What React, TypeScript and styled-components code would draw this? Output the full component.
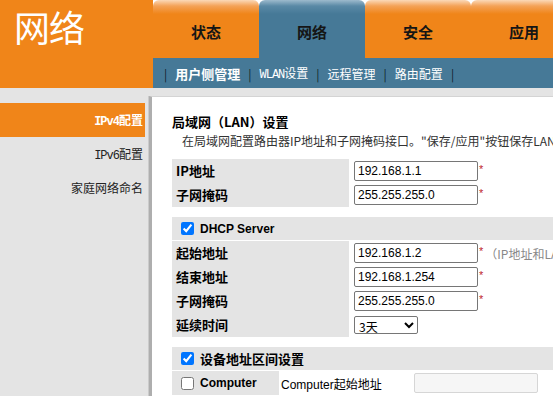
import React from "react";
import styled, { createGlobalStyle } from "styled-components";

const ORANGE = "#f08519";
const BLUE = "#467997";
const GREY = "#e4e4e4";

const GlobalStyle = createGlobalStyle`
  html, body {
    margin: 0;
    padding: 0;
    background: #fff;
  }
  body {
    font-family: "Noto Sans CJK SC", "Liberation Sans", sans-serif;
    overflow: hidden;
  }
`;

const Page = styled.div`
  width: 553px;
  height: 396px;
  overflow: hidden;
  display: flex;
  flex-direction: column;
`;

/* ---------- header ---------- */

const Header = styled.header`
  display: flex;
  height: 88px;
  flex-shrink: 0;
`;

const Brand = styled.div`
  width: 153px;
  flex-shrink: 0;
  box-sizing: border-box;
  background: ${ORANGE};
  color: #fff;
  font-size: 36px;
  line-height: 36px;
  padding: 8px 0 0 14px;
  letter-spacing: -1px;
`;

const NavArea = styled.div`
  flex: 1;
  min-width: 0;
  display: flex;
  flex-direction: column;
`;

const TabRow = styled.nav`
  height: 58px;
  display: flex;
  background: #fff;
`;

const Tab = styled.div<{ $active?: boolean }>`
  width: 106px;
  flex-shrink: 0;
  display: flex;
  align-items: center;
  justify-content: center;
  padding-top: 5px;
  box-sizing: border-box;
  border-radius: 6px 6px 0 0;
  font-size: 15px;
  font-weight: 700;
  color: #151515;
  background: ${(p) =>
    p.$active
      ? `linear-gradient(#9dbacd 0, #5a89a6 6px, ${BLUE} 14px)`
      : `linear-gradient(#fbd9b8 0, #f4a257 6px, ${ORANGE} 14px)`};
`;

const SubBar = styled.div`
  height: 30px;
  background: ${BLUE};
  display: flex;
  align-items: center;
  padding-left: 11px;
  font-size: 12px;
  color: #fff;
`;

const Sep = styled.span`
  color: #0f1f2b;
  font-size: 12px;
`;

const SubLink = styled.span<{ $active?: boolean }>`
  padding: 0 8px;
  font-size: ${(p) => (p.$active ? "13px" : "12px")};
  font-weight: ${(p) => (p.$active ? 700 : 400)};
  white-space: nowrap;
`;

const Latin = styled.span`
  font-family: "Liberation Mono", monospace;
  letter-spacing: -1px;
`;

/* ---------- body ---------- */

const Body = styled.div`
  flex: 1;
  display: flex;
  background: ${GREY};
  padding-top: 8px;
  min-height: 0;
`;

const SideNav = styled.aside`
  width: 149px;
  flex-shrink: 0;
  padding-top: 7px;
  box-sizing: border-box;
`;

const NavItem = styled.div<{ $active?: boolean }>`
  width: 145px;
  height: 34px;
  box-sizing: border-box;
  padding-right: 2px;
  text-align: right;
  font-size: 12px;
  line-height: 34px;
  white-space: nowrap;
  color: ${(p) => (p.$active ? "#fff" : "#222")};
  font-weight: ${(p) => (p.$active ? 700 : 400)};
  background: ${(p) => (p.$active ? ORANGE : "transparent")};
`;

const Panel = styled.main`
  flex: 1;
  min-width: 0;
  background: #fff;
  border-left: 3px solid #aeaeae;
  border-top: 1px solid #d4d4d4;
  box-shadow: -1px 0 0 #cbcbcb;
  padding: 16px 0 0 20px;
  overflow: hidden;
`;

const Form = styled.div`
  width: 640px;
`;

const Title = styled.h2`
  margin: 0;
  font-size: 13px;
  line-height: 17px;
  font-weight: 700;
  color: #000;
`;

const Desc = styled.p`
  margin: 2px 0 0 10px;
  font-size: 12px;
  line-height: 18px;
  color: #333;
  white-space: nowrap;
`;

const Table = styled.div<{ $gap?: number }>`
  margin-top: ${(p) => p.$gap ?? 0}px;
`;

const Row = styled.div`
  display: grid;
  grid-template-columns: 177px 128px auto;
  height: 24px;
  align-items: center;
`;

const Label = styled.div`
  height: 100%;
  background: ${GREY};
  padding-left: 4px;
  font-size: 13px;
  font-weight: 700;
  line-height: 24px;
  color: #000;
`;

const Cell = styled.div`
  padding-left: 5px;
  display: flex;
  align-items: center;
`;

const TextInput = styled.input`
  width: 124px;
  height: 20px;
  box-sizing: border-box;
  border: 1px solid #767676;
  border-radius: 2px;
  padding: 0 3px;
  font-family: "Liberation Sans", Arial, sans-serif;
  font-size: 12px;
  color: #000;
  background: #fff;
  &:disabled {
    background: #f6f6f6;
    border-color: #d6d6d6;
  }
`;

const Select = styled.select`
  width: 64px;
  height: 18px;
  font-family: "Noto Sans CJK SC", "Liberation Sans", sans-serif;
  font-size: 12px;
  padding: 0;
  border: 1px solid #767676;
  border-radius: 2px;
  background: #fff;
`;

const Note = styled.div`
  display: flex;
  align-items: center;
  padding-left: 2px;
  font-size: 12px;
  color: #888;
  white-space: nowrap;
`;

const Req = styled.span`
  color: #c0262d;
  font-family: "Liberation Sans", Arial, sans-serif;
  font-size: 11px;
  margin-top: -4px;
  margin-right: 2px;
`;

const SectionBar = styled.div<{ $cjk?: boolean }>`
  margin-top: 10px;
  margin-bottom: 1px;
  height: 23px;
  background: ${GREY};
  display: flex;
  align-items: center;
  padding-left: 9px;
  font-family: ${(p) =>
    p.$cjk ? `"Noto Sans CJK SC", sans-serif` : `"Liberation Sans", Arial, sans-serif`};
  font-size: ${(p) => (p.$cjk ? "13px" : "12px")};
  font-weight: 700;
  color: #000;
`;

const Check = styled.input`
  width: 13px;
  height: 13px;
  margin: 0 6px 0 0;
  accent-color: #0075ff;
`;

const RangeRow = styled.div`
  display: grid;
  grid-template-columns: 107px 130px auto;
  height: 24px;
  align-items: center;
  margin-top: 1px;
`;

const RangeHead = styled.label`
  height: 100%;
  background: ${GREY};
  display: flex;
  align-items: center;
  padding-left: 9px;
  font-family: "Liberation Sans", Arial, sans-serif;
  font-size: 12px;
  font-weight: 700;
  color: #000;
`;

const RangeText = styled.div`
  padding-left: 2px;
  font-family: "Liberation Sans", "Noto Sans CJK SC", sans-serif;
  font-size: 12px;
  color: #000;
  white-space: nowrap;
`;

type Field = { label: string; value: string; note?: string };

const lanFields: Field[] = [
  { label: "IP地址", value: "192.168.1.1" },
  { label: "子网掩码", value: "255.255.255.0" }
];

const dhcpFields: Field[] = [
  { label: "起始地址", value: "192.168.1.2", note: "（IP地址和LAN IP地址需在同一网段）" },
  { label: "结束地址", value: "192.168.1.254" },
  { label: "子网掩码", value: "255.255.255.0" }
];

function FieldRow({ field }: { field: Field }) {
  return (
    <Row>
      <Label>{field.label}</Label>
      <Cell>
        <TextInput defaultValue={field.value} />
      </Cell>
      <Note>
        <Req>*</Req>
        {field.note}
      </Note>
    </Row>
  );
}

const tabs = ["状态", "网络", "安全", "应用"];

export default function App() {
  return (
    <Page>
      <GlobalStyle />
      <Header>
        <Brand>网络</Brand>
        <NavArea>
          <TabRow>
            {tabs.map((t) => (
              <Tab key={t} $active={t === "网络"}>
                {t}
              </Tab>
            ))}
          </TabRow>
          <SubBar>
            <Sep>|</Sep>
            <SubLink $active>用户侧管理</SubLink>
            <Sep>|</Sep>
            <SubLink>
              <Latin>WLAN</Latin>设置
            </SubLink>
            <Sep>|</Sep>
            <SubLink>远程管理</SubLink>
            <Sep>|</Sep>
            <SubLink>路由配置</SubLink>
            <Sep>|</Sep>
          </SubBar>
        </NavArea>
      </Header>

      <Body>
        <SideNav>
          <NavItem $active>
            <Latin>IPv4</Latin>配置
          </NavItem>
          <NavItem>
            <Latin>IPv6</Latin>配置
          </NavItem>
          <NavItem>家庭网络命名</NavItem>
        </SideNav>

        <Panel>
          <Form>
            <Title>局域网（LAN）设置</Title>
            <Desc>在局域网配置路由器IP地址和子网掩码接口。"保存/应用"按钮保存LAN配置数据。</Desc>

            <Table $gap={9}>
              {lanFields.map((f) => (
                <FieldRow key={f.label} field={f} />
              ))}
            </Table>

            <SectionBar>
              <Check type="checkbox" defaultChecked />
              DHCP Server
            </SectionBar>
            <Table>
              {dhcpFields.map((f) => (
                <FieldRow key={f.label} field={f} />
              ))}
              <Row>
                <Label>延续时间</Label>
                <Cell>
                  <Select defaultValue="3">
                    <option value="1">1天</option>
                    <option value="3">3天</option>
                    <option value="7">7天</option>
                  </Select>
                </Cell>
                <Note />
              </Row>
            </Table>

            <SectionBar $cjk>
              <Check type="checkbox" defaultChecked />
              设备地址区间设置
            </SectionBar>
            <RangeRow>
              <RangeHead>
                <Check type="checkbox" />
                Computer
              </RangeHead>
              <RangeText>Computer起始地址</RangeText>
              <Cell>
                <TextInput disabled />
              </Cell>
            </RangeRow>
          </Form>
        </Panel>
      </Body>
    </Page>
  );
}
